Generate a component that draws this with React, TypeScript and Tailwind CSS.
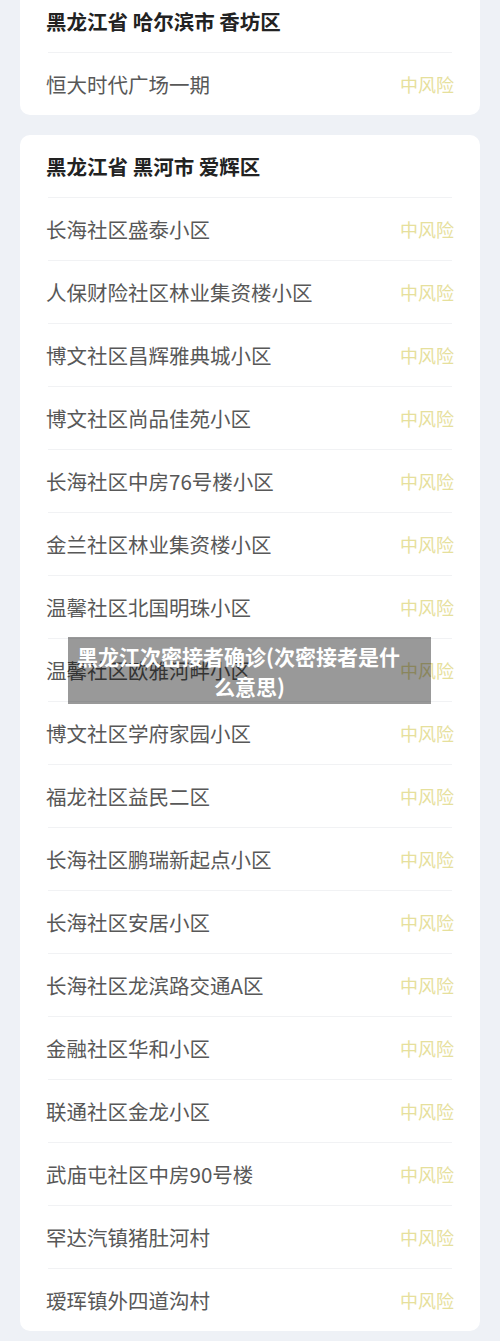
import React from "react";

const items = [
  "长海社区盛泰小区",
  "人保财险社区林业集资楼小区",
  "博文社区昌辉雅典城小区",
  "博文社区尚品佳苑小区",
  "长海社区中房76号楼小区",
  "金兰社区林业集资楼小区",
  "温馨社区北国明珠小区",
  "温馨社区欧雅河畔小区",
  "博文社区学府家园小区",
  "福龙社区益民二区",
  "长海社区鹏瑞新起点小区",
  "长海社区安居小区",
  "长海社区龙滨路交通A区",
  "金融社区华和小区",
  "联通社区金龙小区",
  "武庙屯社区中房90号楼",
  "罕达汽镇猪肚河村",
  "瑷珲镇外四道沟村",
];

function Row({ name }: { name: string }) {
  return (
    <div className="flex h-[62px] items-center justify-between px-[26px]">
      <span className="text-[20.5px] text-[#585858]">{name}</span>
      <span className="text-[18px] text-[#e6e09c]">中风险</span>
    </div>
  );
}

function Sep() {
  return <div className="mx-[28px] h-px bg-[#f1f2f4]" />;
}

function Header({ title }: { title: string }) {
  return (
    <div className="flex h-[62px] items-center px-[26px]">
      <span className="text-[20.5px] font-bold text-[#222222]">{title}</span>
    </div>
  );
}

export default function App() {
  return (
    <div
      className="relative h-[1341px] overflow-hidden bg-[#eef1f6] px-[20px]"
      style={{ fontFamily: '"Noto Sans CJK SC", "Noto Sans", sans-serif' }}
    >
      <div className="-mt-[10px] rounded-[10px] bg-white">
        <Header title="黑龙江省 哈尔滨市 香坊区" />
        <Sep />
        <Row name="恒大时代广场一期" />
      </div>
      <div className="mt-[20px] rounded-[10px] bg-white">
        <Header title="黑龙江省 黑河市 爱辉区" />
        {items.map((n, i) => (
          <React.Fragment key={i}>
            <Sep />
            <Row name={n} />
          </React.Fragment>
        ))}
      </div>
      <div className="absolute left-[68px] top-[637px] flex h-[67px] w-[363px] flex-col items-center justify-center bg-black/40">
        <span className="block pr-[22px] text-[21px] font-bold leading-[30px] text-white">
          黑龙江次密接者确诊(次密接者是什
        </span>
        <span className="block text-[21px] font-bold leading-[30px] text-white">
          么意思)
        </span>
      </div>
    </div>
  );
}
